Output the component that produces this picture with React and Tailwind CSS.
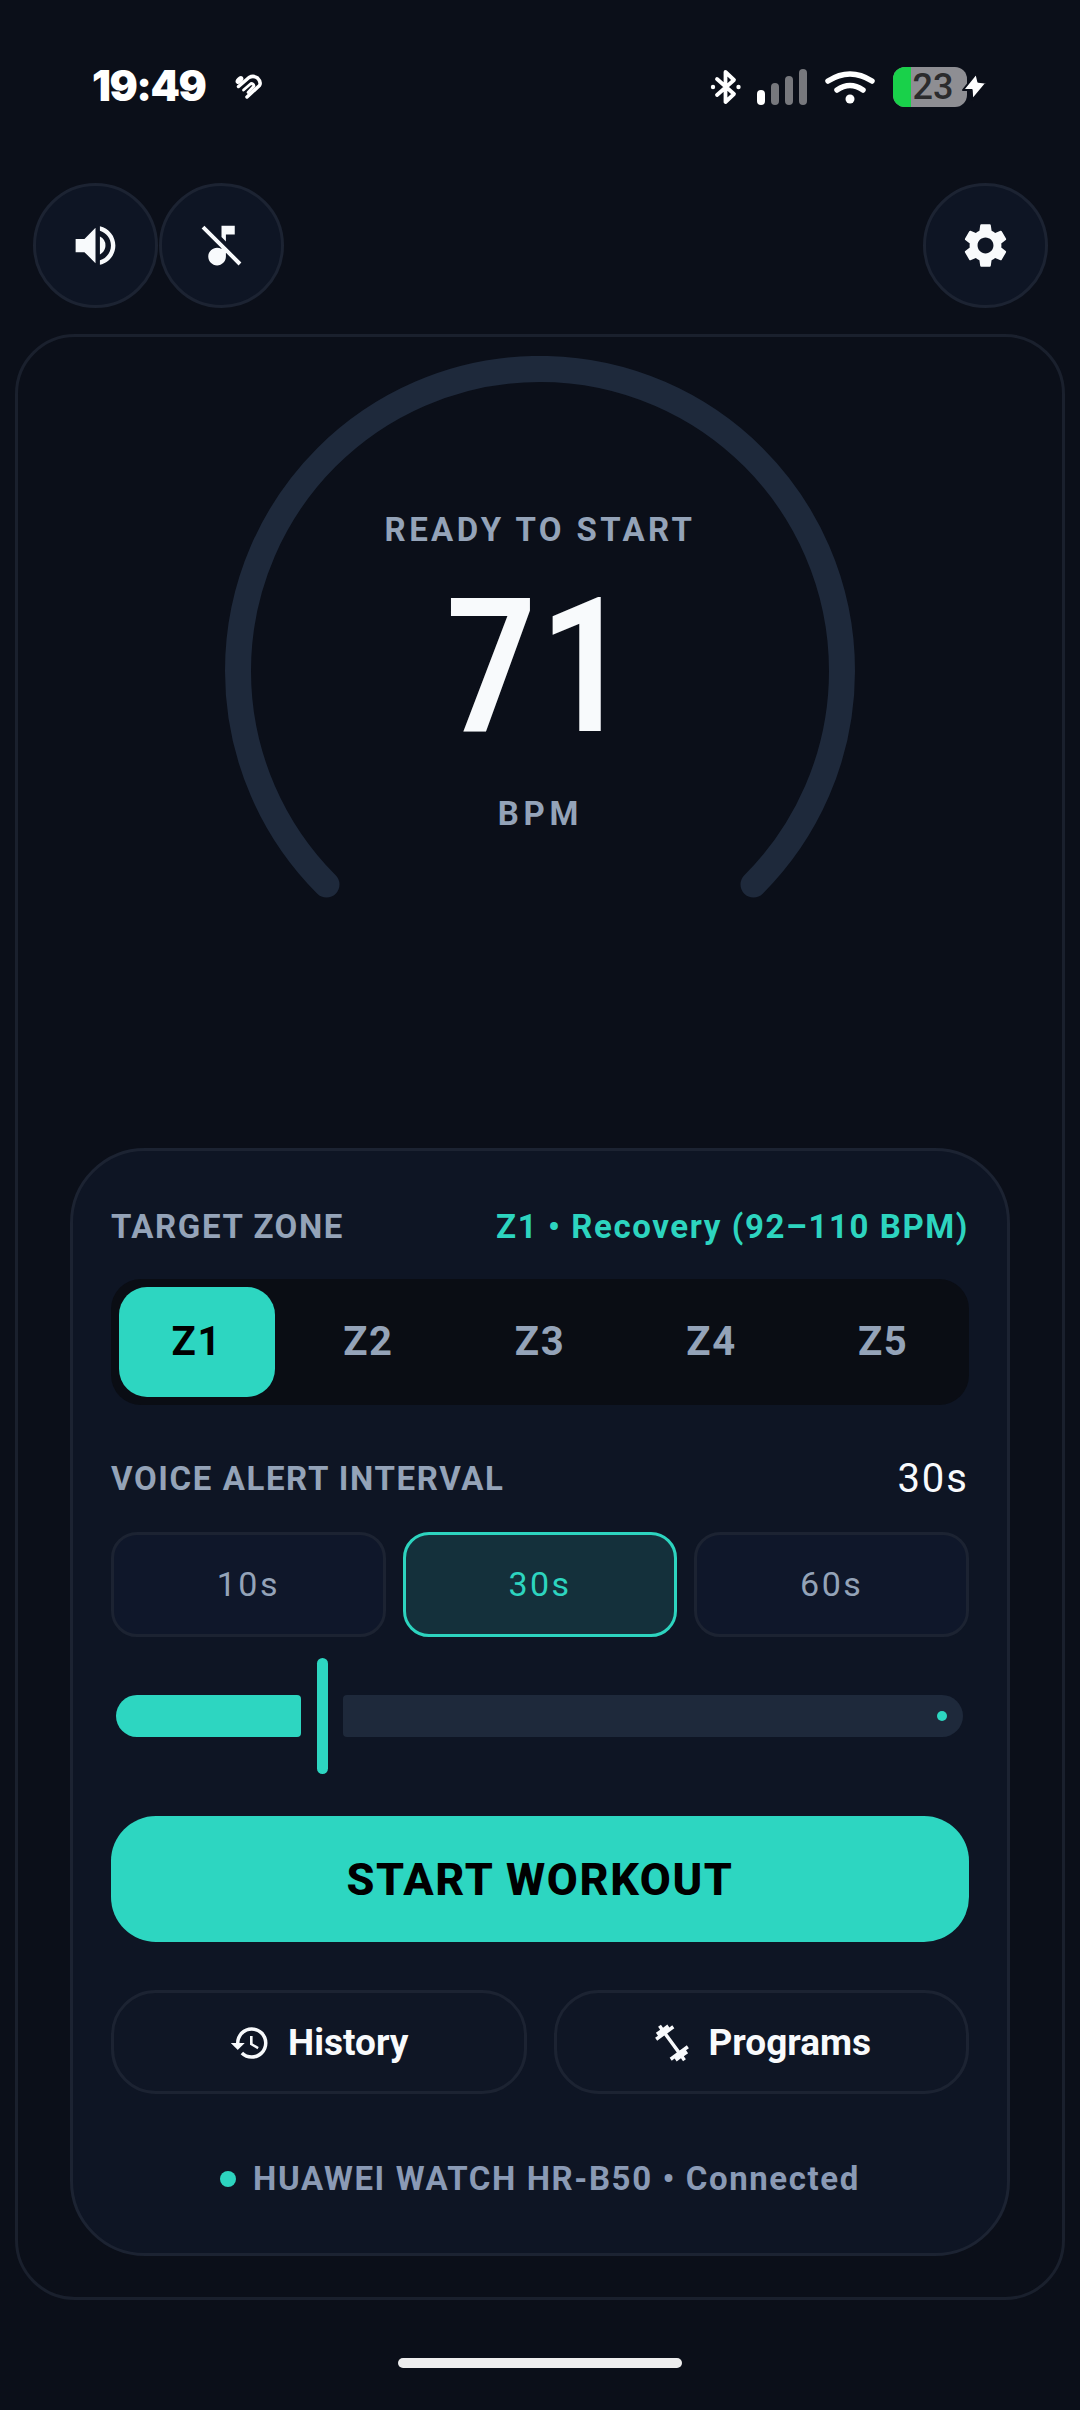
import React from "react";
import { MdVolumeUp, MdMusicOff, MdSettings, MdHistory, MdFitnessCenter } from "react-icons/md";

const Round = ({ children }) => (
  <button className="w-[125px] h-[125px] rounded-full border-[3px] border-[#1c2332] bg-[#0e1524] flex items-center justify-center text-[#f8fafc]">
    {children}
  </button>
);

function StatusBar() {
  return (
    <div className="h-[183px] pl-[92px] pr-[91px] pt-[66px] flex items-start justify-between text-white">
      <div className="flex items-center h-[40px]">
        <span className="font-['Inter',sans-serif] font-black text-[42px] leading-[40px] tracking-[-1.5px]">19:49</span>
        <svg className="ml-[28px] mt-[2px]" width="30" height="26" viewBox="0 0 30 26" fill="none" stroke="#fff" strokeLinecap="round" strokeLinejoin="round">
          <ellipse cx="6.500" cy="6" rx="4.500" ry="3" transform="rotate(-45 6.500 6)" fill="#fff" stroke="none" />
          <path d="M5.500 12.500 L16 3.500 Q20.500 1 24.500 4 Q28.500 8 26.500 11.500 L14 23" strokeWidth="3.500" />
          <path d="M10.500 16 L18 9.500 Q20.500 9.500 21 12 L15 18.500" strokeWidth="2.800" />
        </svg>
      </div>
      <div className="flex items-center h-[40px] mt-[1px]">
        <svg width="32" height="36" viewBox="0 0 32 36" fill="none" stroke="#fff" strokeWidth="3.800" strokeLinejoin="round" strokeLinecap="round">
          <path d="M7 10 L24 25 L15.500 33 L15.500 3 L24 11 L7 26" />
          <circle cx="3" cy="18" r="2.200" fill="#fff" stroke="none" />
          <circle cx="28.500" cy="18" r="2.200" fill="#fff" stroke="none" />
        </svg>
        <div className="ml-[15px] flex items-end gap-[6px] h-[36px]">
          <div className="w-[8px] h-[15px] rounded-full bg-white" />
          <div className="w-[8px] h-[22px] rounded-full bg-[#77787d]" />
          <div className="w-[8px] h-[29px] rounded-full bg-[#77787d]" />
          <div className="w-[8px] h-[36px] rounded-full bg-[#77787d]" />
        </div>
        <svg className="ml-[18px]" width="50" height="34" viewBox="0 0 50 34" fill="none" stroke="#fff" strokeWidth="5.500" strokeLinecap="round">
          <path d="M3 11 Q25 -3 47 11" />
          <path d="M12 20 Q25 11 38 20" />
          <circle cx="25" cy="29" r="4.500" fill="#fff" stroke="none" />
        </svg>
        <div className="ml-[18px] relative w-[74px] h-[40px] rounded-[12px] bg-[#8e8e93] overflow-hidden flex items-center justify-center">
          <div className="absolute left-0 top-0 bottom-0 w-[18px] bg-[#19d14a]" />
          <span className="relative pl-[6px] font-['Roboto',sans-serif] font-medium text-[36px] leading-[40px] text-[#2b2b2d]">23</span>
        </div>
        <svg className="-ml-[8px] relative" width="30" height="32" viewBox="0 0 30 32">
          <path d="M17.300 2.300 L4 19 L12.700 19 L13.300 29 L27.700 11.700 L19.300 10.700 Z" fill="#fff" stroke="#0b0f19" strokeWidth="2" strokeLinejoin="round" />
        </svg>
      </div>
    </div>
  );
}

function Gauge() {
  return (
    <div className="relative w-[630px] h-[792px] mx-auto flex flex-col items-center font-['Roboto',sans-serif]">
      <svg className="absolute left-0 top-0" width="630" height="630" viewBox="0 0 630 630" fill="none">
        <path d="M101.500 528.500 A302 302 0 1 1 528.500 528.500" stroke="#1e293b" strokeWidth="26" strokeLinecap="round" />
      </svg>
      <div className="relative mt-[154px] text-[33px] leading-[40px] font-bold tracking-[3.4px] text-[#94a3b8]">READY TO START</div>
      <div className="relative mt-[27px] text-[188px] leading-[180px] font-medium pr-[4px] [font-stretch:87%] text-[#f8fafc]">71</div>
      <div className="relative mt-[37px] pl-[1px] text-[33px] leading-[40px] font-bold tracking-[4.8px] text-[#94a3b8]">BPM</div>
    </div>
  );
}

function Panel() {
  return (
    <div className="mx-[52px] h-[1108px] rounded-[75px] border-[3px] border-[#1c2332] bg-[#0e1524] px-[38px] pt-[56px] font-['Roboto',sans-serif]">
      <div className="flex items-center justify-between h-[40px]">
        <span className="text-[33px] font-bold tracking-[1.6px] text-[#94a3b8]">TARGET ZONE</span>
        <span className="text-[33px] font-bold tracking-[1.6px] text-[#2dd4bf]">Z1 • Recovery (92–110 BPM)</span>
      </div>
      <div className="mt-[32px] h-[126px] rounded-[30px] bg-[#0a0d14] p-[8px] flex gap-[16px]">
        {["Z1", "Z2", "Z3", "Z4", "Z5"].map((z, i) => (
          <div
            key={z}
            className={
              i === 0
                ? "flex-1 rounded-[28px] bg-[#2dd6c1] flex items-center justify-center text-[40px] font-bold tracking-[1.6px] text-black"
                : "flex-1 rounded-[28px] flex items-center justify-center text-[40px] font-bold tracking-[1.6px] text-[#94a3b8]"
            }
          >
            {z}
          </div>
        ))}
      </div>
      <div className="mt-[54px] flex items-center justify-between h-[40px]">
        <span className="text-[33px] font-bold tracking-[1.6px] text-[#94a3b8]">VOICE ALERT INTERVAL</span>
        <span className="text-[40px] font-normal tracking-[2px] text-[#f8fafc]">30s</span>
      </div>
      <div className="mt-[33px] flex gap-[17px]">
        <div className="flex-1 h-[105px] rounded-[26px] border-[3px] border-[#1c2332] bg-[#0f172a] flex items-center justify-center text-[34px] tracking-[2.5px] font-normal text-[#94a3b8]">10s</div>
        <div className="flex-1 h-[105px] rounded-[26px] border-[3px] border-[#2dd4bf] bg-[#14303b] flex items-center justify-center text-[34px] tracking-[2.5px] font-normal text-[#2dd4bf]">30s</div>
        <div className="flex-1 h-[105px] rounded-[26px] border-[3px] border-[#1c2332] bg-[#0f172a] flex items-center justify-center text-[34px] tracking-[2.5px] font-normal text-[#94a3b8]">60s</div>
      </div>
      <div className="mt-[21px] h-[116px] flex items-center pl-[5px] pr-[6px]">
        <div className="w-[185px] h-[42px] bg-[#2dd6c1] rounded-l-[21px] rounded-r-[4px]" />
        <div className="ml-[16px] w-[11px] h-[116px] rounded-full bg-[#2dd6c1]" />
        <div className="relative ml-[15px] flex-1 h-[42px] bg-[#1e293b] rounded-r-[21px] rounded-l-[4px]">
          <div className="absolute right-[16px] top-[16px] w-[10px] h-[10px] rounded-full bg-[#2dd6c1]" />
        </div>
      </div>
      <button className="mt-[42px] w-full h-[126px] pt-[2px] rounded-[45px] bg-[#2dd6c1] flex items-center justify-center text-[45px] font-extrabold tracking-[1.6px] text-black">
        START WORKOUT
      </button>
      <div className="mt-[48px] flex gap-[27px]">
        <div className="flex-1 h-[104px] pt-[2px] rounded-[45px] border-[3px] border-[#1c2332] bg-[#0f1625] flex items-center justify-center text-[37px] font-bold text-[#f8fafc]">
          <MdHistory size={42} className="mr-[17px]" />
          History
        </div>
        <div className="flex-1 h-[104px] pt-[2px] rounded-[45px] border-[3px] border-[#1c2332] bg-[#0f1625] flex items-center justify-center text-[37px] font-bold text-[#f8fafc]">
          <MdFitnessCenter size={42} className="mr-[15px] rotate-[9deg]" />
          Programs
        </div>
      </div>
      <div className="mt-[65px] flex items-center justify-center h-[40px]">
        <span className="w-[16px] h-[16px] rounded-full bg-[#2dd4bf] mr-[17px]" />
        <span className="text-[33px] font-bold tracking-[1.6px] text-[#8a9ab5]">HUAWEI WATCH HR-B50 • Connected</span>
      </div>
    </div>
  );
}

export default function App() {
  return (
    <div className="w-[1080px] h-[2410px] bg-[#0b0f19] overflow-hidden">
      <StatusBar />
      <div className="flex justify-between pl-[33px] pr-[32px] h-[125px]">
        <div className="flex gap-[1px]">
          <Round><MdVolumeUp size={53} /></Round>
          <Round><MdMusicOff size={53} /></Round>
        </div>
        <Round><MdSettings size={53} /></Round>
      </div>
      <div className="mt-[26px] mx-[15px] h-[1966px] rounded-[60px] border-[3px] border-[#1a202d] pt-[19px]">
        <Gauge />
        <Panel />
      </div>
      <div className="mt-[58px] mx-auto w-[284px] h-[10px] rounded-full bg-[#eeeeee]" />
    </div>
  );
}
